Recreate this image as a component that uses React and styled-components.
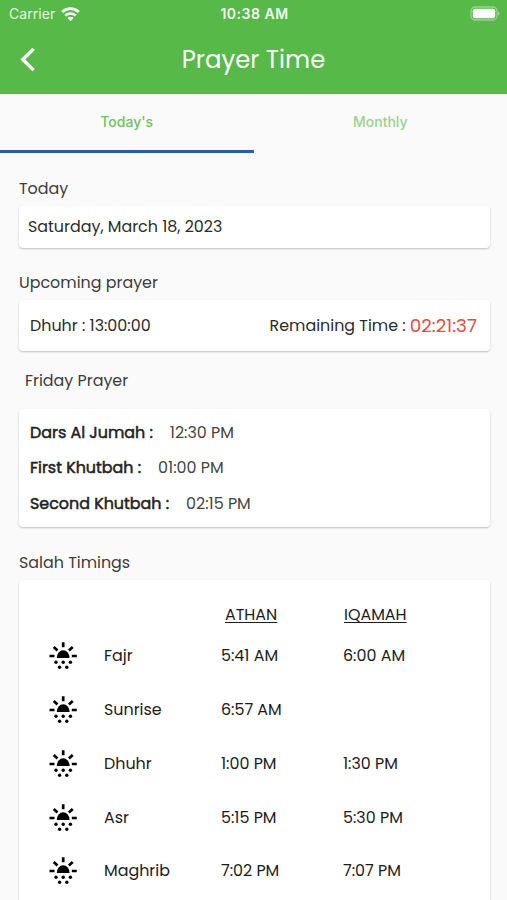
import React from "react";
import styled, { createGlobalStyle } from "styled-components";

const GlobalStyle = createGlobalStyle`
  * {
    box-sizing: border-box;
  }
  body {
    margin: 0;
    background: #fafafa;
    overflow: hidden;
  }
`;

const ScreenBlock = styled.div`
  height: 900px;
  display: flex;
  flex-direction: column;
  overflow: hidden;
  background: #fafafa;
  color: #2b2b2b;
  font-family: Poppins, Inter, "Open Sans", sans-serif;
  font-size: 15.9px;
  line-height: 24px;
  white-space: nowrap;
`;

const Header = styled.header`
  flex: none;
  height: 94px;
  background: #57b947;
  color: #ffffff;
`;

const StatusBar = styled.div`
  display: grid;
  grid-template-columns: 1fr auto 1fr;
  align-items: center;
  height: 28px;
  padding: 0 7px 0 9px;
  font-family: Inter, sans-serif;
  font-size: 14px;

  .status__carrier {
    display: flex;
    align-items: center;
    gap: 6px;
    color: #e6f5e3;
    letter-spacing: 0.05px;
  }

  .status__time {
    font-weight: 600;
    letter-spacing: 0.5px;
    color: #f6fcf5;
  }

  .status__battery {
    display: flex;
    justify-self: end;
    margin-top: -1px;
  }
`;

const TitleBar = styled.div`
  display: grid;
  grid-template-columns: 60px 1fr 60px;
  align-items: center;
  height: 64px;

  .title__back {
    margin-left: 19px;
  }

  .title__text {
    margin: 0;
    text-align: center;
    font-size: 24.4px;
    font-weight: 400;
  }
`;

const Tabs = styled.nav`
  flex: none;
  display: flex;
  height: 59px;
`;

const Tab = styled.div`
  flex: 1;
  padding-top: 16px;
  text-align: center;
  font-family: Inter, sans-serif;
  font-size: 14px;
  font-weight: 500;
  color: ${(props) => (props.$active ? "#6cc35f" : "#98d38f")};
  border-bottom: 3px solid
    ${(props) => (props.$active ? "#2161ab" : "transparent")};
`;

const Content = styled.main`
  padding: 24px 17px 0 19px;
`;

const Label = styled.div`
  height: 24px;
  margin: ${(props) => props.$margin};
  color: #3c3c3c;
`;

const Card = styled.section`
  height: ${(props) => props.$height}px;
  padding: ${(props) => props.$padding || "0 13px 0 11px"};
  background: #ffffff;
  border-radius: 4px;
  box-shadow: 0 1px 2px rgba(0, 0, 0, 0.24);
`;

const CardRow = styled.div`
  display: flex;
  align-items: center;
  justify-content: ${(props) => (props.$spread ? "space-between" : "flex-start")};
  height: ${(props) => props.$height}px;
  gap: ${(props) => props.$gap || 0}px;
`;

const Remaining = styled.span`
  font-size: 18.4px;
  color: #f04a3e;
`;

const JumahName = styled.span`
  color: #222222;
  -webkit-text-stroke: 0.5px #222222;
`;

const JumahTime = styled.span`
  color: #444444;
`;

const TimingRow = styled.div`
  display: grid;
  grid-template-columns: 55px 117px 122px 1fr;
  align-items: center;
  height: 53.75px;
  color: #1c1c1c;
`;

const TimingHead = styled(TimingRow)`
  height: 28px;

  span {
    justify-self: start;
    text-decoration: underline;
    text-decoration-thickness: 1px;
    text-underline-offset: 2px;
    text-decoration-skip-ink: none;
  }

  .timing__athan {
    grid-column: 3;
    margin-left: 4px;
  }

  .timing__iqamah {
    margin-left: 1px;
  }
`;

const WifiIcon = () => (
  <svg width="19" height="15" viewBox="0 0 19 15" fill="none">
    <path d="M1.2 5a12 12 0 0 1 16.6 0" stroke="#fff" strokeWidth="2.9" />
    <path d="M4.3 8.6a7.6 7.6 0 0 1 10.4 0" stroke="#fff" strokeWidth="2.6" />
    <path d="M9.5 14.2 6.4 11.1a4.4 4.4 0 0 1 6.2 0z" fill="#fff" />
  </svg>
);

const BatteryIcon = () => (
  <svg width="30" height="15" viewBox="0 0 30 15">
    <rect x="1" y="1" width="26" height="13" rx="4" fill="none" stroke="#fff" strokeOpacity="0.4" strokeWidth="1.3" />
    <rect x="2.8" y="2.8" width="22.4" height="9.4" rx="2.2" fill="#fff" />
    <path d="M28.2 5.4c1.6.6 1.6 3.6 0 4.2z" fill="#fff" fillOpacity="0.5" />
  </svg>
);

const BackIcon = () => (
  <svg className="title__back" width="18" height="26" viewBox="0 0 18 26">
    <path d="M14.6 1.9 3.8 12.5l10.8 10.6" fill="none" stroke="#fff" strokeWidth="3.4" />
  </svg>
);

const SunIcon = () => (
  <svg width="28" height="28" viewBox="0 0 28 28">
    <path
      d="M14.2.3v5M.5 14h5M22.8 14h5M4.7 4.9l3.8 3.5M23.7 4.9l-3.8 3.5"
      stroke="#000"
      strokeWidth="2.7"
    />
    <path d="M7.8 16a6.4 7.8 0 0 1 12.8 0z" />
    <circle cx="7" cy="20.2" r="1.7" />
    <circle cx="14.2" cy="20.2" r="1.7" />
    <circle cx="21.4" cy="20.2" r="1.7" />
    <circle cx="10.6" cy="25.3" r="1.7" />
    <circle cx="17.8" cy="25.3" r="1.7" />
  </svg>
);

const jumah = [
  { name: "Dars Al Jumah :", time: "12:30 PM" },
  { name: "First Khutbah :", time: "01:00 PM" },
  { name: "Second Khutbah :", time: "02:15 PM" },
];

const timings = [
  { name: "Fajr", athan: "5:41 AM", iqamah: "6:00 AM" },
  { name: "Sunrise", athan: "6:57 AM" },
  { name: "Dhuhr", athan: "1:00 PM", iqamah: "1:30 PM" },
  { name: "Asr", athan: "5:15 PM", iqamah: "5:30 PM" },
  { name: "Maghrib", athan: "7:02 PM", iqamah: "7:07 PM" },
];

const App = () => {
  return (
    <>
      <GlobalStyle />
      <ScreenBlock>
        <Header>
          <StatusBar>
            <div className="status__carrier">
              Carrier
              <WifiIcon />
            </div>
            <span className="status__time">10:38 AM</span>
            <div className="status__battery">
              <BatteryIcon />
            </div>
          </StatusBar>
          <TitleBar>
            <BackIcon />
            <h1 className="title__text">Prayer Time</h1>
          </TitleBar>
        </Header>
        <Tabs>
          <Tab $active>Today's</Tab>
          <Tab>Monthly</Tab>
        </Tabs>
        <Content>
          <Label $margin="0 0 5px">Today</Label>
          <Card $height={42} $padding="0 9px">
            <CardRow $height={42}>Saturday, March 18, 2023</CardRow>
          </Card>
          <Label $margin="23px 0 5px">Upcoming prayer</Label>
          <Card $height={51}>
            <CardRow $height={51} $spread>
              <span>Dhuhr : 13:00:00</span>
              <CardRow $height={51} $gap={4}>
                <span>Remaining Time :</span>
                <Remaining>02:21:37</Remaining>
              </CardRow>
            </CardRow>
          </Card>
          <Label $margin="18px 0 16px 6px">Friday Prayer</Label>
          <Card $height={118} $padding="6.2px 11px">
            {jumah.map(({ name, time }) => (
              <CardRow key={name} $height={35.5} $gap={17}>
                <JumahName>{name}</JumahName>
                <JumahTime>{time}</JumahTime>
              </CardRow>
            ))}
          </Card>
          <Label $margin="24px 0 5px">Salah Timings</Label>
          <Card $height={340} $padding="21.4px 0 0 30px">
            <TimingHead>
              <span className="timing__athan">ATHAN</span>
              <span className="timing__iqamah">IQAMAH</span>
            </TimingHead>
            {timings.map(({ name, athan, iqamah }) => (
              <TimingRow key={name}>
                <SunIcon />
                <span>{name}</span>
                <span>{athan}</span>
                <span>{iqamah}</span>
              </TimingRow>
            ))}
          </Card>
        </Content>
      </ScreenBlock>
    </>
  );
};

export default App;
